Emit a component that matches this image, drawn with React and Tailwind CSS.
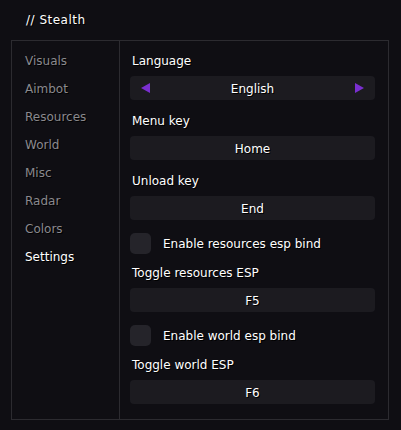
import React from "react";

const tabs = ["Visuals", "Aimbot", "Resources", "World", "Misc", "Radar", "Colors", "Settings"];

const shadow = "[text-shadow:1px_1px_0_#000]";

const Label = ({ children, className = "" }) => (
  <div className={`h-[20px] flex items-center pl-[2px] pt-[1px] text-[12px] text-white ${shadow} ${className}`}>
    {children}
  </div>
);

const KeyBox = ({ children }) => (
  <div className={`mt-[6px] h-[24px] rounded-[4px] bg-[#1c1b20] flex items-center justify-center pt-[1px] text-[12px] text-white ${shadow}`}>
    {children}
  </div>
);

const Check = ({ label }) => (
  <div className="mt-[13px] h-[20px] flex items-center gap-[12px]">
    <div className="w-[21px] h-[21px] rounded-[5px] bg-[#25242a]" />
    <span className={`pt-[1px] text-[12px] text-white ${shadow}`}>{label}</span>
  </div>
);

export default function App() {
  return (
    <div
      className="w-[401px] h-[430px] bg-[#0f0e13] overflow-hidden"
      style={{ fontFamily: '"DejaVu Sans", sans-serif' }}
    >
      <div className={`h-[40px] flex items-center pl-[26px] text-[12px] tracking-[0.5px] text-white ${shadow}`}>// Stealth</div>
      <div className="ml-[11px] w-[378px] h-[380px] border border-[#2c2b30] flex">
        <div className="w-[108px] border-r border-[#2c2b30] pt-[6px] pl-[13px]">
          {tabs.map((t) => (
            <div
              key={t}
              className={`h-[28px] flex items-center text-[12px] ${shadow} ${
                t === "Settings" ? "text-white" : "text-[#8a898e]"
              }`}
            >
              {t}
            </div>
          ))}
        </div>
        <div className="flex-1 pt-[9px] pl-[10px] pr-[13px]">
          <Label>Language</Label>
          <div className={`mt-[6px] h-[24px] rounded-[4px] bg-[#1c1b20] flex items-center justify-between px-[11px] text-[12px] text-white ${shadow}`}>
            <svg width="9" height="10" viewBox="0 0 9 10"><path d="M0 5 L9 0 L9 10 Z" fill="#7a2fd0" /></svg>
            <span className="pt-[1px]">English</span>
            <svg width="9" height="10" viewBox="0 0 9 10"><path d="M9 5 L0 0 L0 10 Z" fill="#7a2fd0" /></svg>
          </div>
          <Label className="mt-[10px]">Menu key</Label>
          <KeyBox>Home</KeyBox>
          <Label className="mt-[10px]">Unload key</Label>
          <KeyBox>End</KeyBox>
          <Check label="Enable resources esp bind" />
          <Label className="mt-[9px]">Toggle resources ESP</Label>
          <KeyBox>F5</KeyBox>
          <Check label="Enable world esp bind" />
          <Label className="mt-[9px]">Toggle world ESP</Label>
          <KeyBox>F6</KeyBox>
        </div>
      </div>
    </div>
  );
}
